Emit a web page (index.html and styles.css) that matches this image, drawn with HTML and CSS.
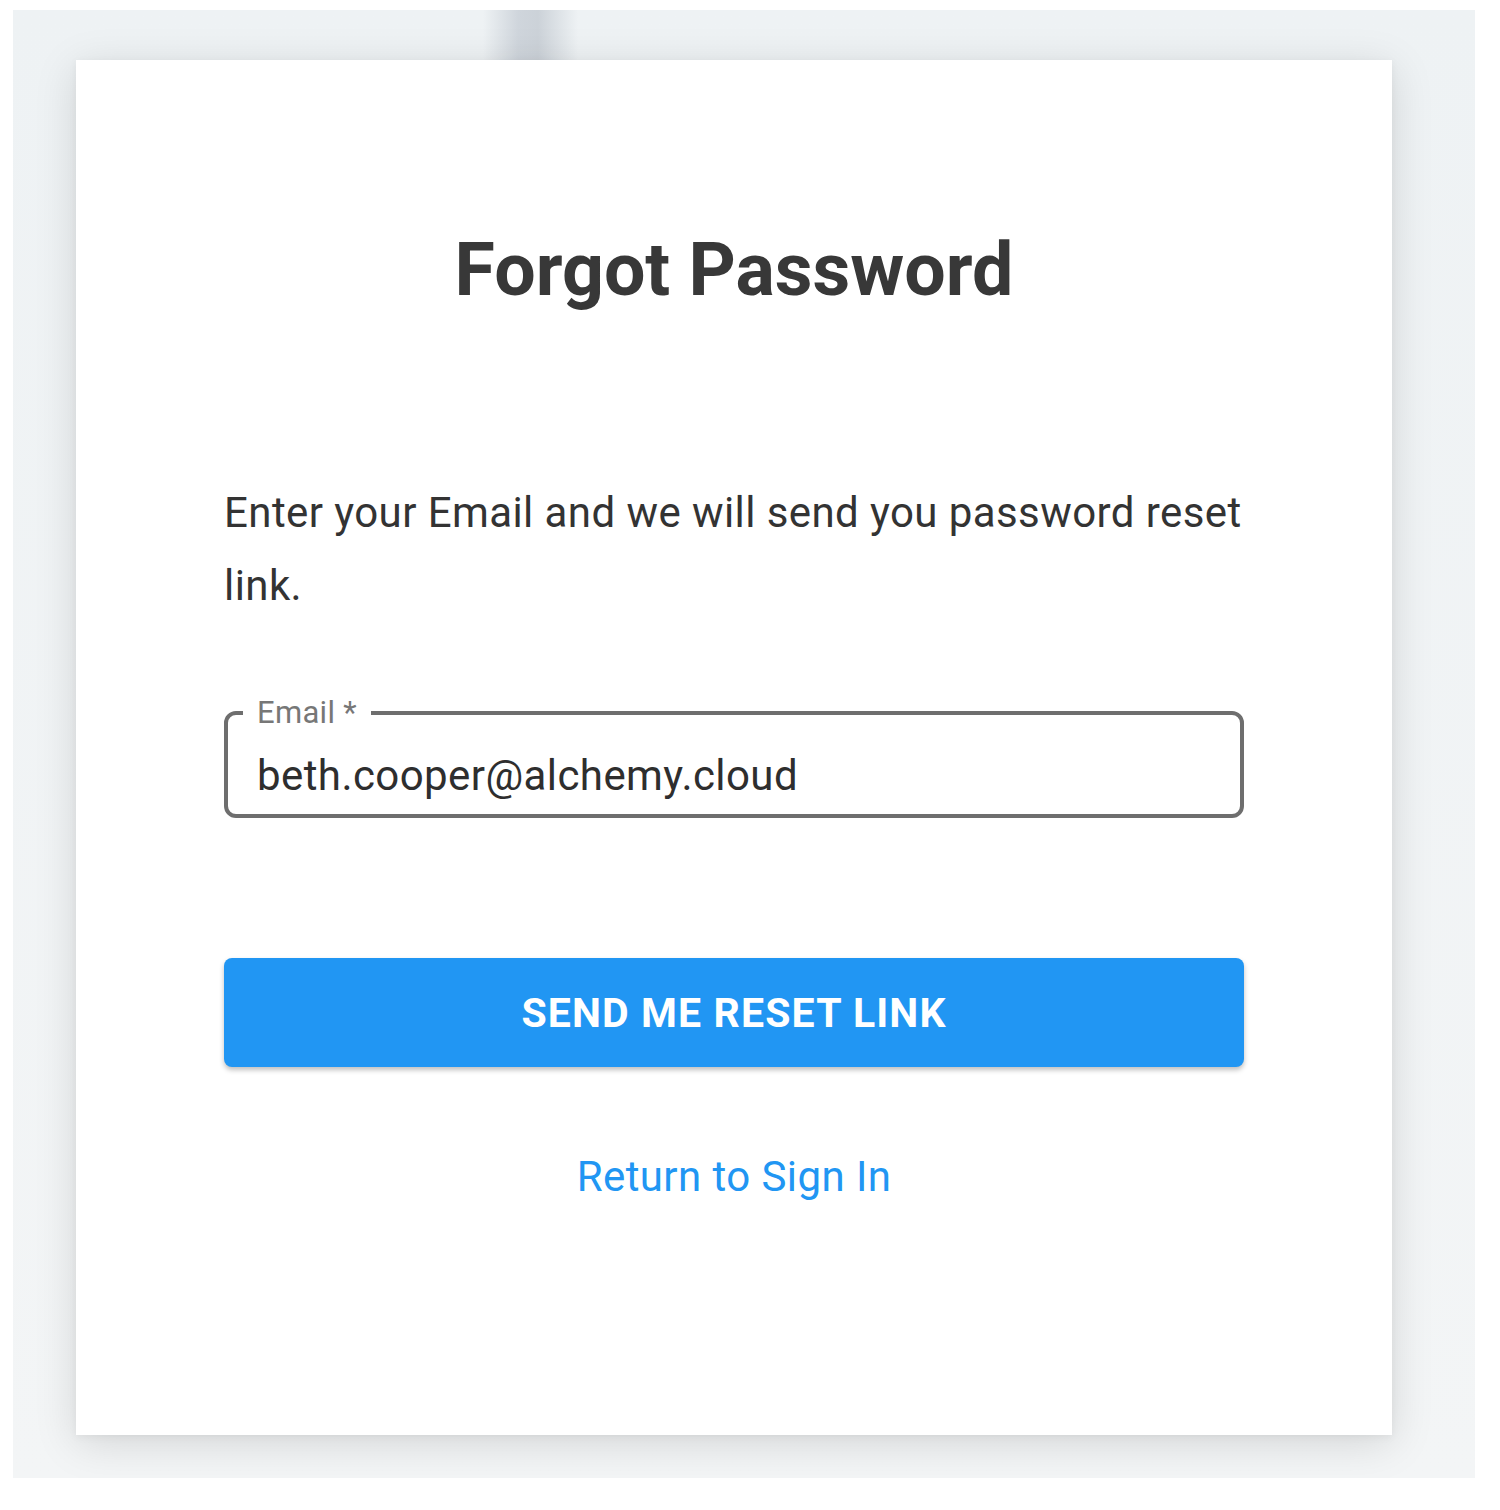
FILE: index.html
```html
<!DOCTYPE html>
<html lang="en">
  <head>
    <meta charset="UTF-8" />
    <meta name="viewport" content="width=device-width, initial-scale=1.0" />
    <title>Forgot Password</title>
    <link rel="stylesheet" href="styles.css">
  </head>
  <body>
    <!-- Blurred page behind the dialog -->
    <div class="backdrop">
      <div class="card">
        <h1 class="title">Forgot Password</h1>
        <p class="intro">Enter your Email and we will send you password reset link.</p>

        <form class="reset-form">
          <fieldset class="field">
            <legend class="field-label">Email *</legend>
            <input class="field-input" type="email" id="email" value="beth.cooper@alchemy.cloud" />
          </fieldset>
          <button type="submit" class="send-btn">SEND ME RESET LINK</button>
        </form>

        <a class="back-link" href="#">Return to Sign In</a>
      </div>
    </div>
  </body>
</html>
```

FILE: styles.css
```css
/* Page and blurred backdrop */
body {
  margin: 0;
  background-color: #fff;
  font-family: Roboto, "Liberation Sans", sans-serif;
}
.backdrop {
  margin: 10px 0 0 13px;
  width: 1462px;
  height: 1468px;
  box-sizing: border-box;
  padding: 50px 0 0 63px;
  background:
    linear-gradient(90deg, rgba(0, 0, 0, 0) 470px, rgba(150, 160, 175, 0.35) 505px, rgba(140, 150, 165, 0.35) 525px, rgba(0, 0, 0, 0) 565px) top left / 100% 50px no-repeat,
    linear-gradient(180deg, #eef2f4, #f3f5f6);
}

/* Dialog card */
.card {
  width: 1316px;
  height: 1375px;
  box-sizing: border-box;
  padding: 165px 148px 0;
  background-color: #fff;
  box-shadow: 0 8px 40px rgba(0, 0, 0, 0.13), 0 2px 8px rgba(0, 0, 0, 0.05);
  display: flex;
  flex-direction: column;
}
.title {
  margin: 0;
  font-size: 73.5px;
  line-height: 91px;
  font-weight: 700;
  color: #383838;
  text-align: center;
}
.intro {
  margin: 160px 0 0;
  font-size: 42px;
  line-height: 73px;
  letter-spacing: 0.01em;
  color: #333;
}

/* Form */
.reset-form {
  display: flex;
  flex-direction: column;
  margin-top: 72px;
}
.field {
  margin: 0;
  padding: 0 15px 14px;
  border: 4px solid #6e6e6e;
  border-radius: 12px;
}
.field-label {
  padding: 0 14px;
  font-size: 31px;
  letter-spacing: 0.01em;
  color: #777;
}
.field-input {
  width: 100%;
  box-sizing: border-box;
  border: none;
  outline: none;
  padding: 20px 14px 0;
  font-family: inherit;
  font-size: 42px;
  letter-spacing: 0.01em;
  color: #2e2e2e;
  background: transparent;
}
.send-btn {
  margin-top: 140px;
  height: 109px;
  border: none;
  border-radius: 8px;
  background-color: #2196f3;
  color: #fff;
  font-family: inherit;
  font-size: 41px;
  font-weight: 700;
  letter-spacing: 0.0275em;
  box-shadow: 0 3px 5px rgba(0, 0, 0, 0.25);
  cursor: pointer;
}
.back-link {
  margin-top: 85px;
  align-self: center;
  font-size: 42px;
  letter-spacing: 0.01em;
  color: #2196f3;
  text-decoration: none;
}
```
